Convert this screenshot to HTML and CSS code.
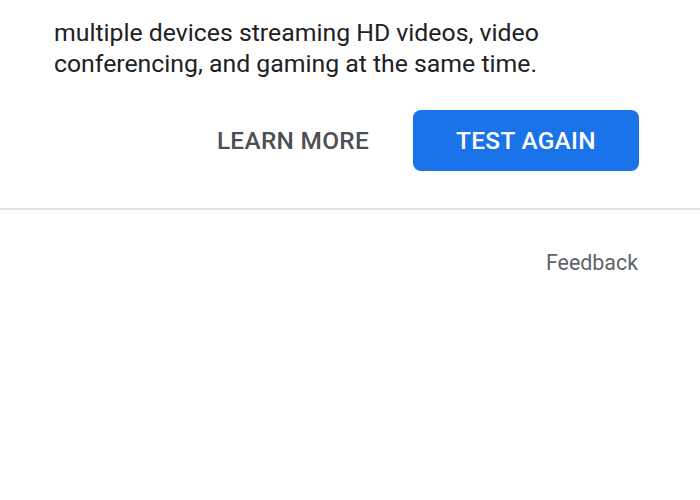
FILE: index.html
```html
<!DOCTYPE html>
<html>
<head>
<meta charset="utf-8">
<link rel="stylesheet" href="styles.css">
</head>
<body>
<div class="card">
  <p class="desc">multiple devices streaming HD videos, video conferencing, and gaming at the same time.</p>
  <div class="actions">
    <button class="btn btn-text">LEARN MORE</button>
    <button class="btn btn-primary">TEST AGAIN</button>
  </div>
</div>
<div class="footer">
  <a class="feedback">Feedback</a>
</div>
</body>
</html>
```
FILE: styles.css
```css
html, body {
  margin: 0;
  padding: 0;
  background: #ffffff;
  font-family: Roboto, "Liberation Sans", sans-serif;
}
.card {
  padding: 17px 61px 37px 54px;
  border-bottom: 2px solid #e3e3e3;
}
.desc {
  margin: 0;
  width: 560px;
  font-size: 24.8px;
  line-height: 31px;
  color: #202124;
}
.actions {
  display: flex;
  justify-content: flex-end;
  align-items: center;
  gap: 44px;
  margin-top: 31px;
}
.btn {
  font-family: Roboto, "Liberation Sans", sans-serif;
  font-weight: 500;
  font-size: 24.4px;
  letter-spacing: 0.3px;
  border: none;
  background: none;
  padding: 0;
  cursor: pointer;
}
.btn-text {
  color: #4d4f52;
}
.btn-primary {
  background: #1a73e8;
  color: #ffffff;
  border-radius: 8px;
  width: 226px;
  height: 61px;
}
.footer {
  display: flex;
  justify-content: flex-end;
  padding: 40px 62px 0 0;
}
.feedback {
  font-size: 21.4px;
  color: #5f6368;
}
```
